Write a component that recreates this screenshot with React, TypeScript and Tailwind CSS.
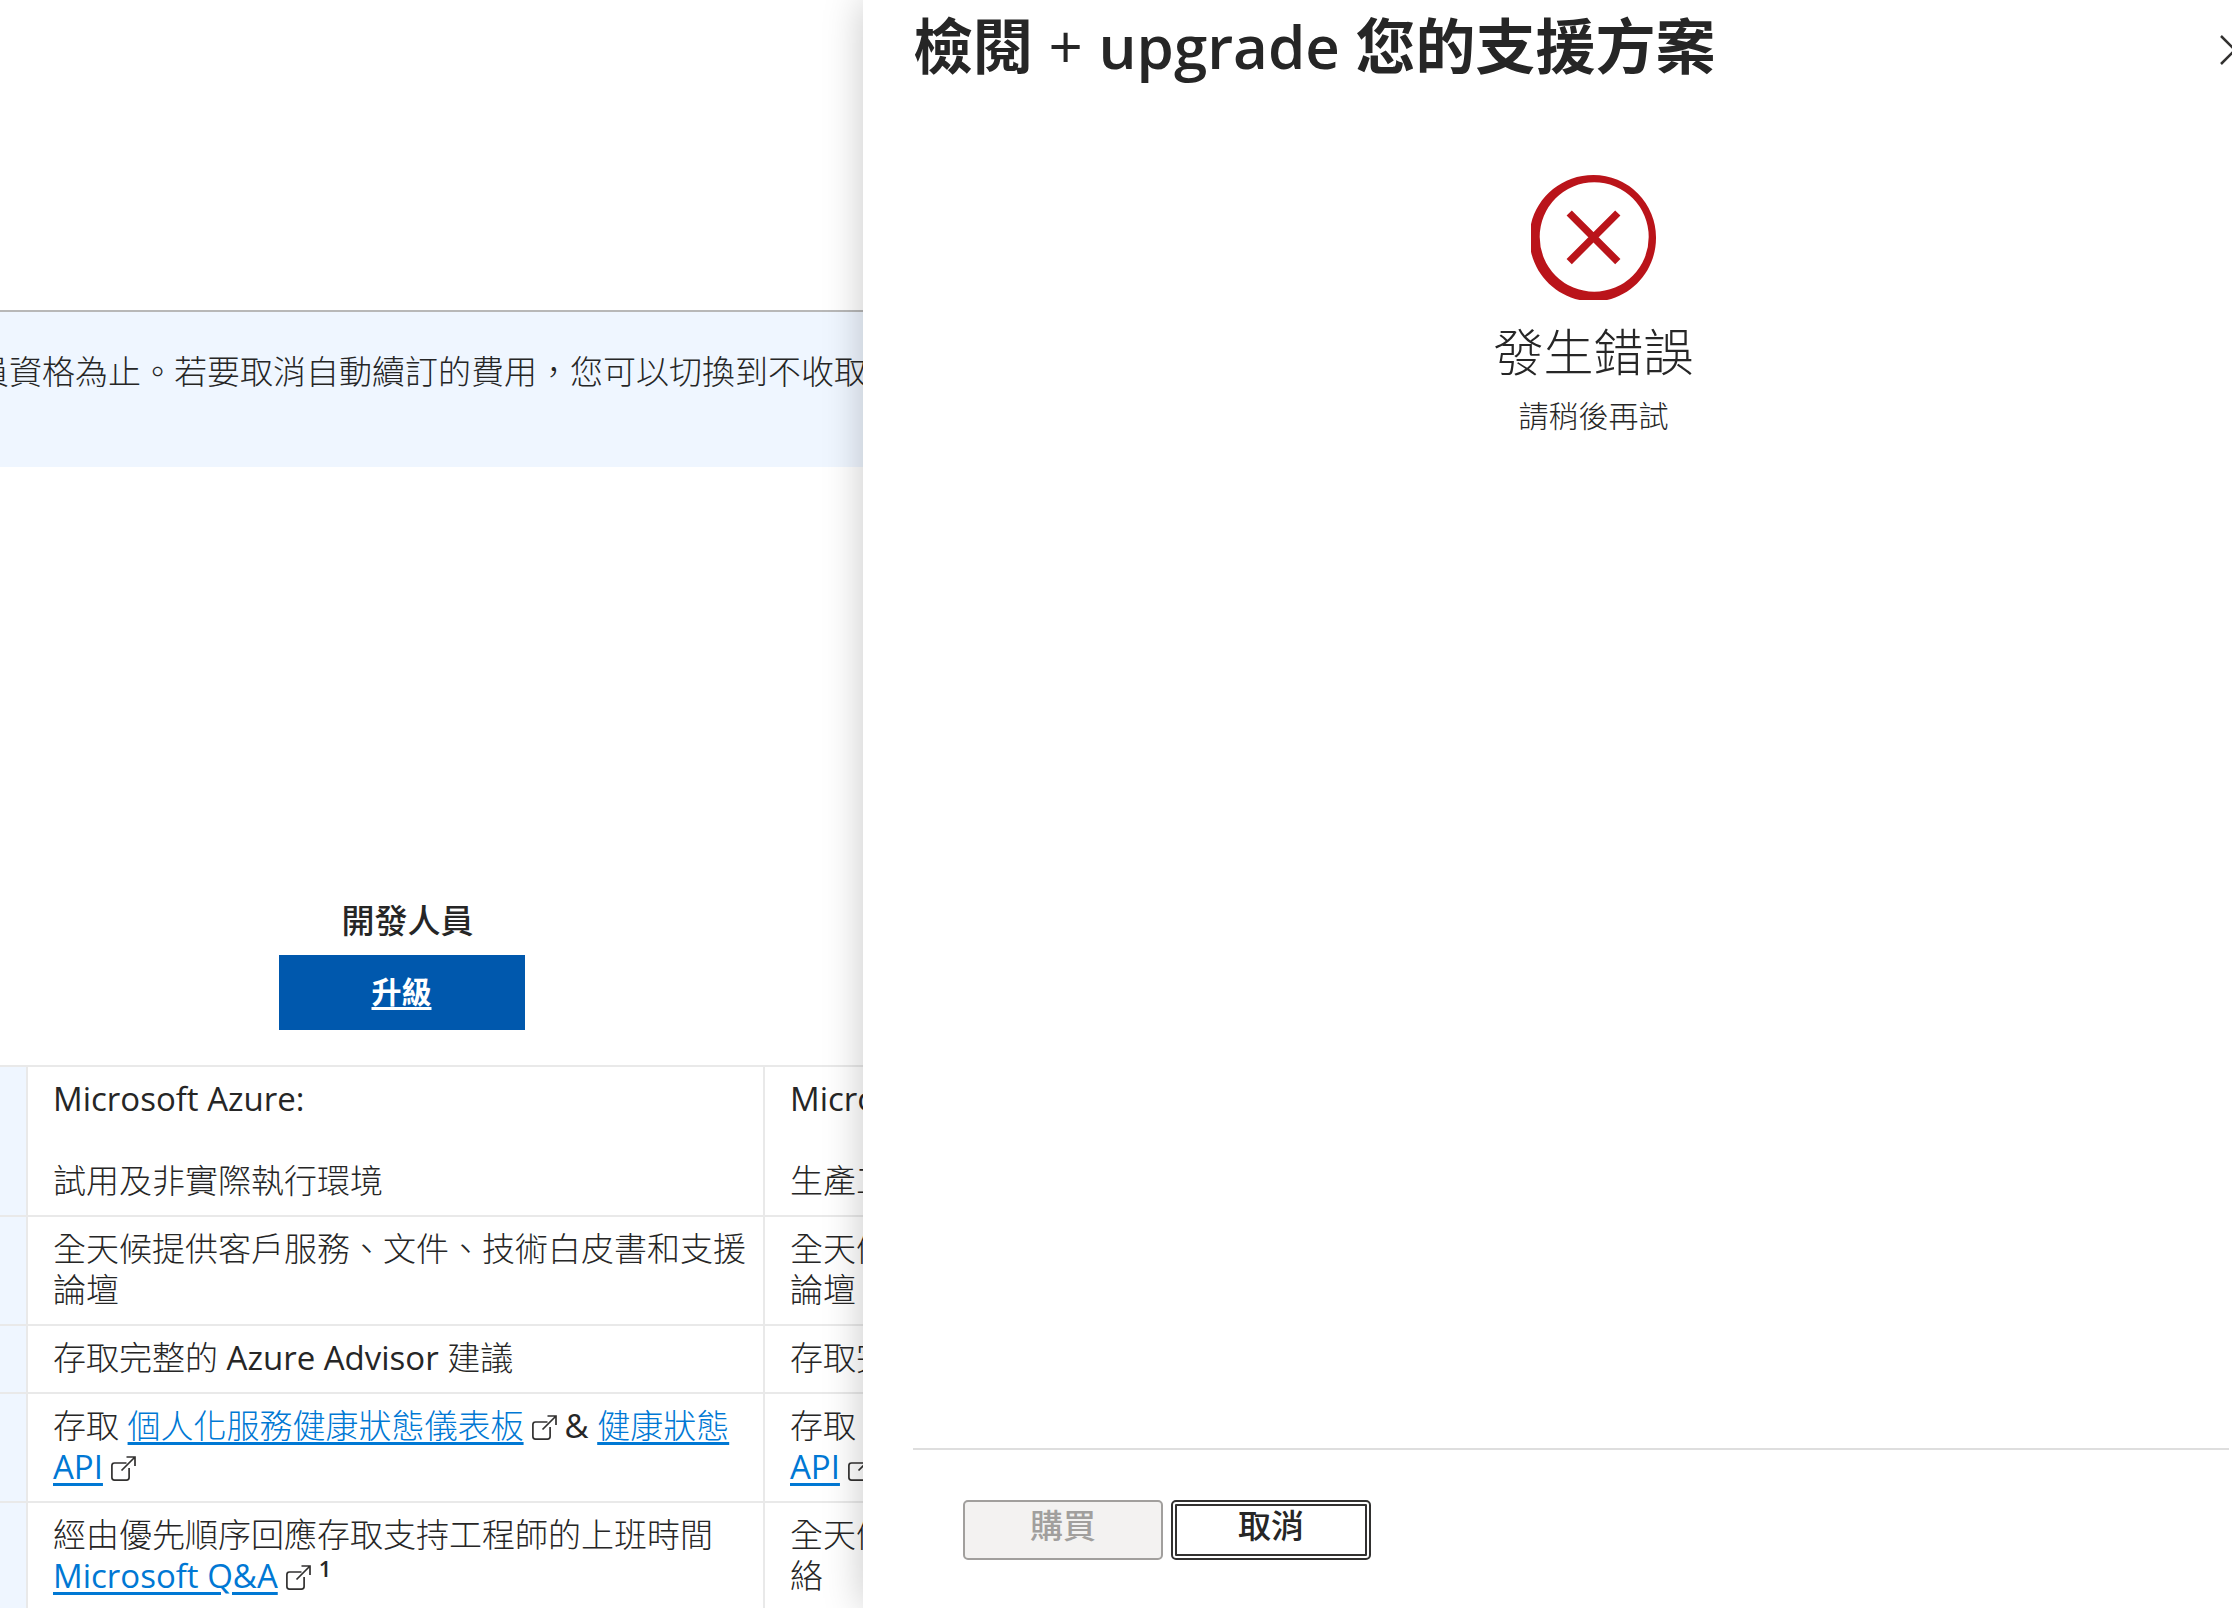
import type { ReactNode } from "react";

function ExternalIcon() {
  return (
    <svg
      className="mx-2 inline-block h-[25px] w-[25px] align-[-2px] text-[#323130]"
      viewBox="0 0 25 25"
      fill="none"
      stroke="currentColor"
      strokeWidth="1.7"
      aria-hidden="true"
    >
      <path d="M15.500 7H3.500A2.600 2.600 0 0 0 .9 9.600V21.500A2.600 2.600 0 0 0 3.500 24.100H15.500A2.600 2.600 0 0 0 18.100 21.500V12" />
      <path d="M10.500 14.500 24 1M15.500 1H24V10" />
    </svg>
  );
}

function ExternalLink({ children }: { children: ReactNode }) {
  return (
    <a href="#" className="text-[#0078d4] underline decoration-3 underline-offset-4">
      {children}
    </a>
  );
}

function HealthCell() {
  return (
    <>
      存取 <ExternalLink>個人化服務健康狀態儀表板</ExternalLink>
      <ExternalIcon />
      <span className="font-normal">&amp;</span>{" "}
      <ExternalLink>
        健康狀態 <span className="font-normal">API</span>
      </ExternalLink>
      <ExternalIcon />
    </>
  );
}

const rows: { developer: ReactNode; standard: ReactNode }[] = [
  {
    developer: (
      <>
        <p className="mb-[41px] font-normal">Microsoft Azure:</p>
        <p>試用及非實際執行環境</p>
      </>
    ),
    standard: (
      <>
        <p className="mb-[41px] font-normal">Microsoft Azure:</p>
        <p>生產工作負載環境</p>
      </>
    ),
  },
  {
    developer: "全天候提供客戶服務、文件、技術白皮書和支援論壇",
    standard: "全天候提供客戶服務、文件、技術白皮書和支援論壇",
  },
  {
    developer: (
      <>
        存取完整的 <span className="font-normal">Azure Advisor</span> 建議
      </>
    ),
    standard: (
      <>
        存取完整的 <span className="font-normal">Azure Advisor</span> 建議
      </>
    ),
  },
  { developer: <HealthCell />, standard: <HealthCell /> },
  {
    developer: (
      <>
        經由優先順序回應存取支持工程師的上班時間{" "}
        <span className="font-normal whitespace-nowrap">
          <ExternalLink>Microsoft Q&amp;A</ExternalLink>
          <ExternalIcon />
          <sup className="text-[22px] font-semibold">1</sup>
        </span>
      </>
    ),
    standard: "全天候透過電子郵件及電話與支援工程師進行聯絡",
  },
];

function PlanTable() {
  return (
    <table className="w-[1502px] table-fixed border-separate border-spacing-0 text-left">
      <colgroup>
        <col className="w-7" />
        <col className="w-[737px]" />
        <col className="w-[737px]" />
      </colgroup>
      <thead>
        <tr>
          <td className="border-b-2 border-[#e9e9e9]" />
          <th className="border-b-2 border-[#e9e9e9] pb-[35px] pl-2.5 text-center font-medium">
            <div className="mb-[14px] pl-3">開發人員</div>
            <a
              href="#"
              className="mx-auto flex h-[75px] w-[246px] items-center justify-center bg-[#0058ad] pb-0.5 text-[30px] font-bold text-white underline decoration-3 underline-offset-4"
            >
              升級
            </a>
          </th>
          <td className="border-b-2 border-[#e9e9e9]" />
        </tr>
      </thead>
      <tbody>
        {rows.map((row, i) => (
          <tr key={i} className="align-top">
            <td className="border-r-2 border-b-2 border-[#e9e9e9] bg-[#eff6ff]" />
            <td className="border-r-2 border-b-2 border-[#e9e9e9] pt-[11px] pr-4 pb-[14px] pl-[25px]">
              {row.developer}
            </td>
            <td className="border-r-2 border-b-2 border-[#e9e9e9] pt-[11px] pr-4 pb-[14px] pl-[25px]">
              {row.standard}
            </td>
          </tr>
        ))}
      </tbody>
    </table>
  );
}

function ErrorIcon() {
  return (
    <svg className="h-[125px] w-[125px]" viewBox="0 0 125 125" aria-hidden="true">
      <path
        fill="#ba141a"
        fillRule="evenodd"
        d="M62.500 0A62.500 62.500 0 0 1 125 63C125 98 97 126.500 62.500 126.500C27 126.500 -1.500 98 -1.500 63C-1.500 28 27 0 62.500 0ZM63.200 7.300A54.500 54.700 0 1 0 63.200 116.700A54.500 54.700 0 1 0 63.200 7.300Z"
      />
      <path d="M38.200 38 86.800 86.600M86.800 38 38.200 86.600" stroke="#ba141a" strokeWidth="7.400" />
    </svg>
  );
}

function ReviewPanel() {
  return (
    <aside className="relative z-10 flex flex-col bg-white pl-[50px] shadow-[0_0_38px_rgba(0,0,0,0.22)]">
      <header className="flex items-center justify-between pt-1.5">
        <h2 className="text-[60px] leading-[80px] font-bold whitespace-nowrap">
          檢閱 <span className="font-normal">+</span>{" "}
          <span className="font-semibold">upgrade</span> 您的支援方案
        </h2>
        <button type="button" aria-label="關閉" className="mt-2 -mr-[18px] shrink-0">
          <svg
            className="h-[30px] w-[30px]"
            viewBox="0 0 30 30"
            stroke="#323130"
            strokeWidth="2.500"
            aria-hidden="true"
          >
            <path d="M1 1 29 29M29 1 1 29" />
          </svg>
        </button>
      </header>

      <div className="flex flex-1 flex-col items-center pt-[89px] pl-[42px]">
        <ErrorIcon />
        <h3 className="mt-5 text-[50px] leading-[64px]">發生錯誤</h3>
        <p className="mt-3 text-[30px] leading-[40px]">請稍後再試</p>
      </div>

      <footer className="mr-[3px] flex gap-2 border-t-2 border-[#dedede] px-[50px] pt-[50px] pb-12 font-medium">
        <button
          type="button"
          disabled
          className="h-[60px] w-[200px] rounded-[5px] border-2 border-[#a19f9d] bg-[#f3f2f1] pb-2.5 text-[#a19f9d]"
        >
          購買
        </button>
        <button
          type="button"
          className="h-[60px] w-[200px] rounded-[5px] border-2 border-[#323130] bg-white pb-2.5 outline-2 -outline-offset-6 outline-[#323130]"
        >
          取消
        </button>
      </footer>
    </aside>
  );
}

export default function App() {
  return (
    <div className="grid h-screen grid-cols-[863fr_1369fr] overflow-hidden bg-white font-['Open_Sans','Noto_Sans_CJK_TC',sans-serif] text-[33px] leading-[41px] font-light text-[#262626]">
      <main className="min-w-0 overflow-hidden pt-[310px]">
        <div className="border-t-2 border-[#b8b8b8] bg-[#eff6ff] pt-[39px] pb-[75px]">
          <p className="-ml-6 whitespace-nowrap">
            員資格為止。若要取消自動續訂的費用，您可以切換到不收取每月費用的方案。
          </p>
        </div>
        <div className="mt-[433px]">
          <PlanTable />
        </div>
      </main>
      <ReviewPanel />
    </div>
  );
}
